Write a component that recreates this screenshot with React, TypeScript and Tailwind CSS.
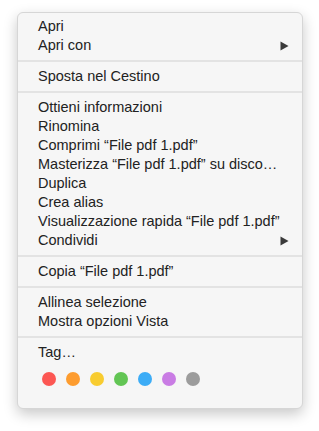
const groups: { label: string; sub?: boolean }[][] = [
  [{ label: "Apri" }, { label: "Apri con", sub: true }],
  [{ label: "Sposta nel Cestino" }],
  [
    { label: "Ottieni informazioni" },
    { label: "Rinomina" },
    { label: "Comprimi “File pdf 1.pdf”" },
    { label: "Masterizza “File pdf 1.pdf” su disco…" },
    { label: "Duplica" },
    { label: "Crea alias" },
    { label: "Visualizzazione rapida “File pdf 1.pdf”" },
    { label: "Condividi", sub: true },
  ],
  [{ label: "Copia “File pdf 1.pdf”" }],
  [{ label: "Allinea selezione" }, { label: "Mostra opzioni Vista" }],
];

const tagColors = ["#fc5753", "#fd9c2f", "#f8cc30", "#62c554", "#3cacf6", "#c97ce4", "#9c9c9c"];

function Arrow() {
  return (
    <svg width="9" height="10" viewBox="0 0 9 10" className="shrink-0">
      <path d="M0.5 0.5 L8.5 5 L0.5 9.5 Z" fill="#3a3a3a" />
    </svg>
  );
}

function Separator() {
  return <div className="mt-[5px] mb-[5px] h-[2px] bg-[#e3e3e3]" />;
}

export default function App() {
  return (
    <div
      className="min-h-screen bg-white pt-[12px] pl-[17px]"
      style={{ fontFamily: '"Liberation Sans", Arial, sans-serif' }}
    >
      <div className="w-[286px] h-[397px] rounded-[6px] bg-[#f6f6f6] border border-[#d6d6d6] shadow-[0_5px_14px_rgba(0,0,0,0.22)] pt-[4px] text-[14.5px] text-[#222222]">
        {groups.map((g, gi) => (
          <div key={gi}>
            {gi > 0 && <Separator />}
            {g.map((item) => (
              <div key={item.label} className="h-[19px] leading-[19px] pl-[20px] pr-[13px] flex items-center justify-between whitespace-nowrap">
                <span>{item.label}</span>
                {item.sub && <Arrow />}
              </div>
            ))}
          </div>
        ))}
        <Separator />
        <div className="h-[19px] leading-[19px] pl-[20px]">Tag…</div>
        <div className="flex gap-[10px] pl-[24px] mt-[10px]">
          {tagColors.map((c) => (
            <span key={c} className="w-[14px] h-[14px] rounded-full" style={{ backgroundColor: c }} />
          ))}
        </div>
      </div>
    </div>
  );
}
